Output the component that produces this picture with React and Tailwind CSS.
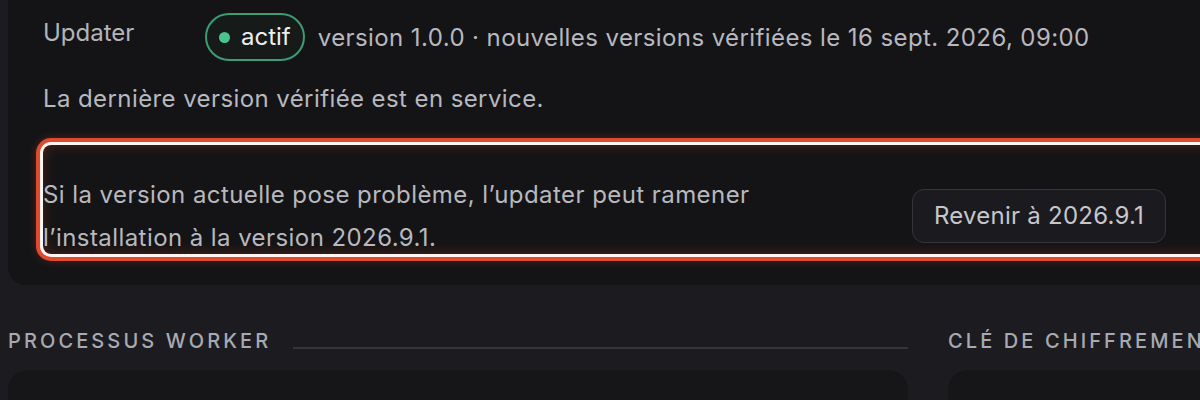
import { useState } from "react";

const SectionHeader = ({ title, line = true }) => (
  <div className="flex items-center gap-[22px] h-[40px]">
    <h3 className="text-[20px] tracking-[0.155em] uppercase text-[#a9a9b1] whitespace-nowrap font-medium">{title}</h3>
    {line && <div className="flex-1 h-[2px] bg-[#34343a] mt-[14px]"></div>}
  </div>
);

const App = () => {
  const [rolledBack, setRolledBack] = useState(false);

  return (
    <div
      className="w-[1200px] h-[400px] overflow-hidden bg-[#1c1c20] text-[#b8b8bf]"
      style={{ fontFamily: "Inter, 'Noto Sans', sans-serif" }}
    >
      <div className="w-[1400px] pl-2">
        {/* carte updater */}
        <div className="bg-[#141416] rounded-b-[18px] pl-[35px] pt-[13px] pb-[31px]">
          <div className="flex items-start">
            <span className="w-[162px] text-[24px] leading-[32px] mt-[4px] text-[#b4b4bb]">Updater</span>
            <div className="flex items-center gap-[13px]">
              <span className="inline-flex items-center h-[48px] pl-[12px] pr-[12px] gap-[11px] rounded-full border-2 border-[#3c9c74] bg-[#161a19] text-[24px] text-[#eeeeee]">
                <span className="w-[11px] h-[11px] rounded-full bg-[#4cc38e]"></span>
                actif
              </span>
              <span className="text-[24px] tracking-[0.017em] text-[#b8b8bf] mt-[2px]">
                version 1.0.0 · nouvelles versions vérifiées le 16 sept. 2026, 09:00
              </span>
            </div>
          </div>

          <p className="text-[24px] tracking-[0.017em] leading-[32px] mt-[22px] text-[#b8b8bf]">
            La dernière version vérifiée est en service.
          </p>

          {/* encadré de retour arrière */}
          <div className="mt-[30px] w-[1300px] h-[109px] rounded-[8px] shadow-[0_0_0_3px_#fff6f2,0_0_0_7px_#e04a2f,0_0_10px_6px_rgba(224,74,47,0.35),inset_0_0_14px_rgba(224,74,47,0.28)]">
            <div className="flex items-center pt-[28px]">
              <p className="w-[760px] text-[24px] tracking-[0.018em] leading-[43px] text-[#b8b8bf]">
                Si la version actuelle pose problème, l’updater peut ramener l’installation à la version 2026.9.1.
              </p>
              <button
                onClick={() => setRolledBack(true)}
                className="ml-[109px] h-[54px] px-[21px] rounded-[12px] border border-[#34343b] bg-[#1b1b1f] text-[24px] tracking-[0.01em] text-[#c6c6cc] hover:bg-[#232328]"
              >
                {rolledBack ? "Retour en cours…" : "Revenir à 2026.9.1"}
              </button>
            </div>
          </div>
        </div>

        {/* sections du bas */}
        <div className="grid grid-cols-[900px_452px] gap-x-[40px] mt-[36px]">
          <SectionHeader title="Processus worker" />
          <SectionHeader title="Clé de chiffrement" line={false} />
          <div className="mt-[9px] h-[120px] rounded-[20px] bg-[#161618]"></div>
          <div className="mt-[9px] h-[120px] rounded-[20px] bg-[#161618]"></div>
        </div>
      </div>
    </div>
  );
};

export default App;
